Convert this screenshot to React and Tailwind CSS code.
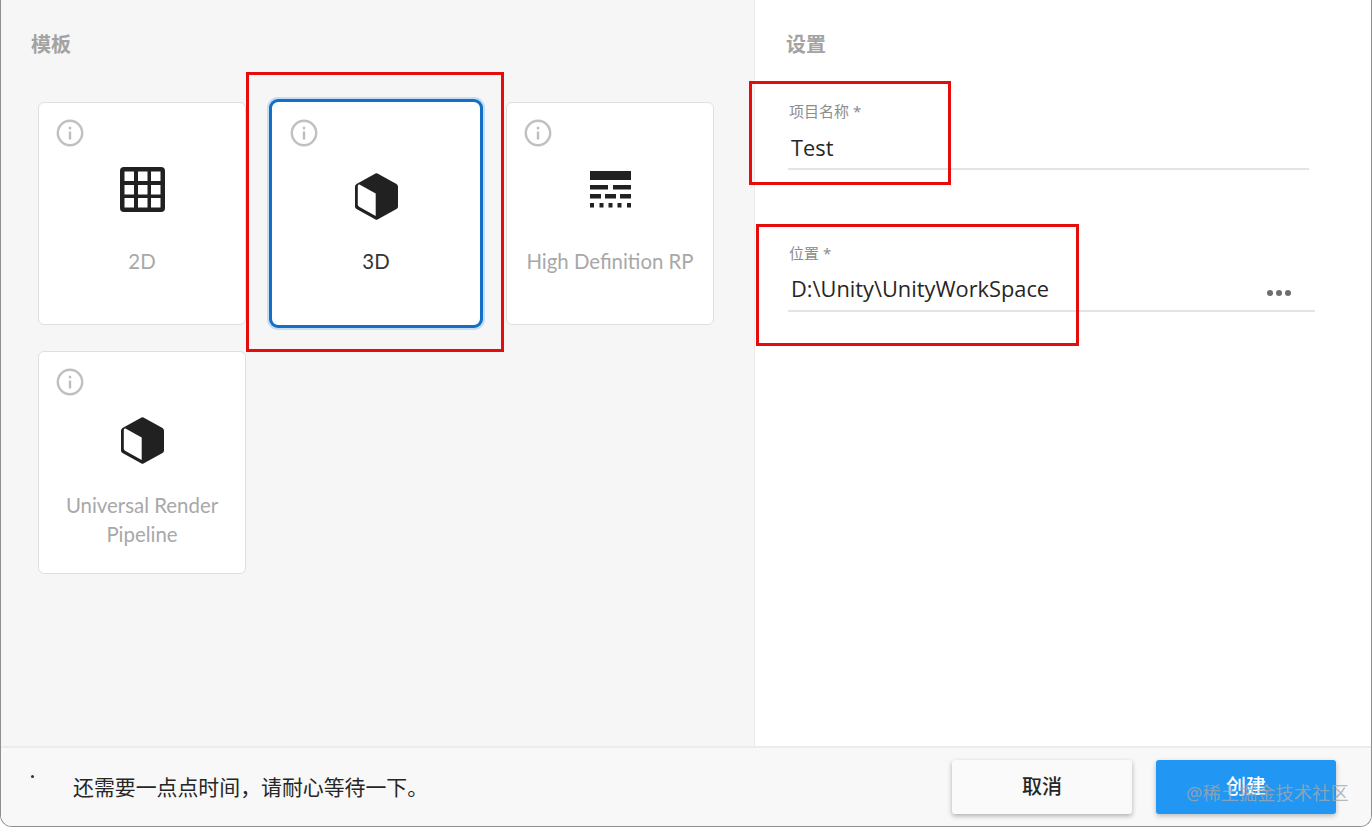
const cjk = { fontFamily: '"Noto Sans", "Noto Sans CJK SC", sans-serif' };
const latin = { fontFamily: 'Lato, "Noto Sans CJK SC", sans-serif' };

function InfoIcon() {
  return (
    <svg width="28" height="28" viewBox="0 0 28 28" className="block">
      <circle cx="14" cy="14" r="12.2" fill="none" stroke="#c0c0c0" strokeWidth="2.4" />
      <rect x="12.8" y="12.5" width="2.4" height="8" fill="#bdbdbd" />
      <rect x="12.8" y="7.8" width="2.4" height="2.6" fill="#bdbdbd" />
    </svg>
  );
}

function GridIcon() {
  return (
    <svg width="45" height="45" viewBox="0 0 45 45" className="block">
      <rect width="45" height="45" rx="4" fill="#212121" />
      <g fill="#fff">
        <rect x="4.5" y="4.5" width="9.5" height="9.5" />
        <rect x="18" y="4.5" width="9.5" height="9.5" />
        <rect x="31" y="4.5" width="9.5" height="9.5" />
        <rect x="4.5" y="18" width="9.5" height="9.5" />
        <rect x="18" y="18" width="9.5" height="9.5" />
        <rect x="31" y="18" width="9.5" height="9.5" />
        <rect x="4.5" y="31" width="9.5" height="9.5" />
        <rect x="18" y="31" width="9.5" height="9.5" />
        <rect x="31" y="31" width="9.5" height="9.5" />
      </g>
    </svg>
  );
}

function CubeIcon() {
  return (
    <svg width="43" height="47" viewBox="0 0 43 47" className="block">
      <path d="M20.5 0.5 Q21.5 0 22.5 0.5 L41.5 11 Q43 12 43 13.5 L43 33.5 Q43 35 41.5 36 L22.5 46.5 Q21.5 47 20.5 46.5 L1.5 36 Q0 35 0 33.5 L0 13.5 Q0 12 1.5 11 Z" fill="#212121" />
      <path d="M4.5 11.5 L20.7 20.5 L20.7 43 L4.5 34 Q2.8 33 2.8 31.5 L2.8 13 Q2.8 11 4.5 11.5 Z" fill="#fff" />
    </svg>
  );
}

function HdrpIcon() {
  return (
    <svg width="41" height="37" viewBox="0 0 41 37" className="block">
      <g fill="#212121">
        <rect x="0" y="0" width="41" height="9" />
        <rect x="0" y="14" width="18" height="4.5" />
        <rect x="23" y="14" width="18" height="4.5" />
        <rect x="0" y="23" width="11" height="4.5" />
        <rect x="15" y="23" width="11" height="4.5" />
        <rect x="30" y="23" width="11" height="4.5" />
        <rect x="0" y="32" width="4" height="4.5" />
        <rect x="9.5" y="32" width="4" height="4.5" />
        <rect x="18.5" y="32" width="4" height="4.5" />
        <rect x="27.5" y="32" width="4" height="4.5" />
        <rect x="37" y="32" width="4" height="4.5" />
      </g>
    </svg>
  );
}

function TemplateCard({ icon, iconTop, textTop, lines, selected }) {
  return (
    <div
      className={
        selected
          ? 'relative h-[223px] w-[208px] rounded-[6px] bg-white outline-[3px] outline-[#1470c4] shadow-[0_0_0_5px_#c5ddf5]'
          : 'relative h-[223px] w-[208px] rounded-[6px] border border-[#dfdfdf] bg-white'
      }
    >
      <div className={selected ? 'absolute left-[18px] top-[17px]' : 'absolute left-[17px] top-[16px]'}>
        <InfoIcon />
      </div>
      <div className={`flex h-[120px] justify-center ${iconTop}`}>{icon}</div>
      <div
        className={
          selected
            ? `${textTop} text-center text-[20.4px] leading-[29px] text-[#333333]`
            : `${textTop} text-center text-[20.4px] leading-[29px] text-[#a8a8a8]`
        }
        style={latin}
      >
        {lines.map((line) => (
          <div key={line}>{line}</div>
        ))}
      </div>
    </div>
  );
}

function Field({ label, value, width, valuePad, trailing }) {
  return (
    <div className={width}>
      <div className="h-[20px] pl-px text-[15px] leading-[18px] text-[#8c8c8c]" style={cjk}>
        {label}
      </div>
      <div className={`flex h-[48px] items-center justify-between border-b-2 border-[#e4e4e4] pl-[3px] pr-[24px] ${valuePad}`}>
        <span className="text-[21.8px] leading-[30px] text-[#262626]" style={{ fontFamily: '"Open Sans", sans-serif' }}>
          {value}
        </span>
        {trailing}
      </div>
    </div>
  );
}

function RedBox({ className }) {
  return <div className={`pointer-events-none absolute border-[3px] border-[#e60c0c] ${className}`} />;
}

export default function App() {
  return (
    <div className="relative flex h-[827px] w-[1372px] flex-col overflow-hidden rounded-b-[12px] border-x border-b border-[#8f8f8f] bg-white" style={cjk}>
      <div className="flex h-[746px]">
        {/* Templates */}
        <div className="w-[754px] border-r border-[#ececec] bg-[#f6f6f6] pl-[37px]">
          <div className="-ml-[7px] pt-[30px] text-[20px] font-bold leading-[29px] text-[#a3a3a3]">模板</div>
          <div className="mt-[43px] grid w-[676px] grid-cols-[208px_208px_208px] gap-[26px]">
            <TemplateCard icon={<GridIcon />} iconTop="pt-[64px]" textTop="mt-[24px]" lines={['2D']} />
            <TemplateCard icon={<CubeIcon />} iconTop="pt-[71px]" textTop="mt-[25px]" lines={['3D']} selected />
            <TemplateCard icon={<HdrpIcon />} iconTop="pt-[68px]" textTop="mt-[24px]" lines={['High Definition RP']} />
            <TemplateCard icon={<CubeIcon />} iconTop="pt-[65px]" textTop="mt-[19px]" lines={['Universal Render', 'Pipeline']} />
          </div>
        </div>

        {/* Settings */}
        <div className="flex-1 pl-[31px]">
          <div className="pt-[30px] text-[20px] font-bold leading-[29px] text-[#a3a3a3]">设置</div>
          <div className="mt-[43px] flex flex-col gap-[74px] pl-[2px]">
            <Field label="项目名称 *" value="Test" width="w-[521px]" valuePad="pt-[6px]" />
            <Field
              label="位置 *"
              value="D:\Unity\UnityWorkSpace"
              width="w-[527px]"
              valuePad="pt-[4px]"
              trailing={
                <span className="flex gap-[3px] pt-[7px]">
                  <span className="h-[6px] w-[6px] rounded-full bg-[#6e6e6e]" />
                  <span className="h-[6px] w-[6px] rounded-full bg-[#6e6e6e]" />
                  <span className="h-[6px] w-[6px] rounded-full bg-[#6e6e6e]" />
                </span>
              }
            />
          </div>
        </div>
      </div>

      {/* Footer */}
      <div className="relative flex flex-1 items-center justify-between border-t-2 border-[#ececec] bg-[#f8f8f8] pl-[72px] pr-[35px]">
        <span className="absolute left-[30px] top-[27px] h-[3px] w-[3px] rounded-full bg-[#333333]" />
        <span className="text-[20.9px] leading-[28px] text-[#262626]">还需要一点点时间，请耐心等待一下。</span>
        <div className="flex gap-[24px]">
          <button className="h-[54px] w-[180px] rounded-[3px] bg-[#fafafa] text-[20px] font-medium text-[#262626] shadow-[0_2px_5px_rgba(0,0,0,0.3)]">
            取消
          </button>
          <button className="h-[54px] w-[180px] rounded-[3px] bg-[#2196f3] text-[20px] font-medium text-white shadow-[0_2px_5px_rgba(0,0,0,0.25)]">
            创建
          </button>
        </div>
        {/* Watermark */}
        <span className="absolute left-[1185px] top-[31px] text-[18.3px] leading-[28px] text-[#a0a8b0]/80">@稀土掘金技术社区</span>
      </div>

      <RedBox className="left-[245px] top-[72px] h-[280px] w-[258px]" />
      <RedBox className="left-[748px] top-[81px] h-[104px] w-[202px]" />
      <RedBox className="left-[755px] top-[224px] h-[122px] w-[323px]" />
    </div>
  );
}
